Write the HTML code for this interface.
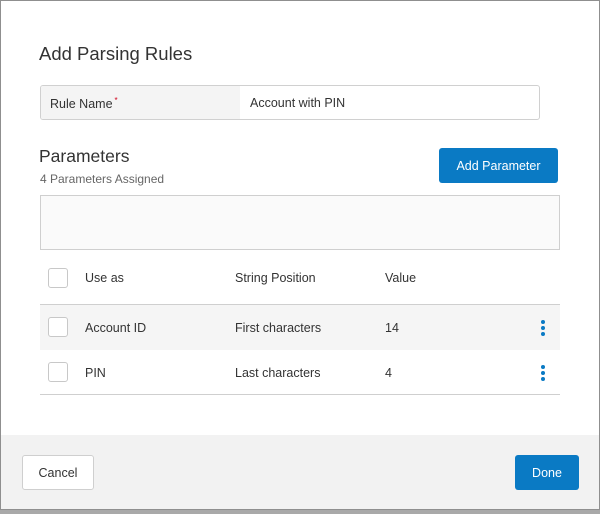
<!DOCTYPE html>
<html><head><style>
*{box-sizing:border-box;margin:0;padding:0}
body{width:600px;height:514px;background:#a9a9a9;font-family:"Liberation Sans",sans-serif;position:relative;overflow:hidden;color:#333}
.dlg{position:absolute;left:0;top:0;width:600px;height:510px;background:#fff}
.bd{position:absolute;left:0;top:0;width:600px;height:510px;border:1px solid #8f8f8f;pointer-events:none}
.a{position:absolute}
.t{font-size:12.5px;color:#333}
.cb{position:absolute;width:20px;height:20px;border:1px solid #c8c8c8;border-radius:3px;background:#fff}
.keb{position:absolute;width:4px}
.keb i{display:block;width:4px;height:4px;border-radius:2px;background:#0a7ac4;margin-bottom:2px}
</style></head><body>
<div class="dlg">
<div class="a" style="left:39px;top:43px;font-size:18.5px;color:#333">Add Parsing Rules</div>
<div class="a" style="left:40px;top:85px;width:500px;height:35px;border:1px solid #d0d0d0;border-radius:3px;overflow:hidden">
 <div class="a" style="left:0;top:0;width:199px;height:33px;background:#f4f4f4"></div>
 <div class="a t" style="left:9px;top:10px">Rule Name<sup style="color:#d0021b;font-size:8px;margin-left:2px">*</sup></div>
 <div class="a t" style="left:209px;top:10px">Account with PIN</div>
</div>
<div class="a" style="left:39px;top:146px;font-size:17.5px;color:#333">Parameters</div>
<div class="a" style="left:40px;top:172px;font-size:12px;color:#666">4 Parameters Assigned</div>
<div class="a" style="left:439px;top:148px;width:119px;height:35px;background:#0a7ac4;border-radius:3px;color:#fff;font-size:12.5px;line-height:36px;text-align:center">Add Parameter</div>
<div class="a" style="left:40px;top:195px;width:520px;height:55px;background:#fafafa;border:1px solid #cfcfcf"></div>
<div class="cb" style="left:48px;top:268px"></div>
<div class="a t" style="left:85px;top:271px">Use as</div>
<div class="a t" style="left:235px;top:271px">String Position</div>
<div class="a t" style="left:385px;top:271px">Value</div>
<div class="a" style="left:40px;top:304px;width:520px;height:1px;background:#cfcfcf"></div>
<div class="a" style="left:40px;top:305px;width:520px;height:45px;background:#f5f5f5"></div>
<div class="cb" style="left:48px;top:317px"></div>
<div class="a t" style="left:85px;top:321px">Account ID</div>
<div class="a t" style="left:235px;top:321px">First characters</div>
<div class="a t" style="left:385px;top:321px">14</div>
<div class="keb" style="left:541px;top:320px"><i></i><i></i><i></i></div>
<div class="cb" style="left:48px;top:362px"></div>
<div class="a t" style="left:85px;top:366px">PIN</div>
<div class="a t" style="left:235px;top:366px">Last characters</div>
<div class="a t" style="left:385px;top:366px">4</div>
<div class="keb" style="left:541px;top:365px"><i></i><i></i><i></i></div>
<div class="a" style="left:40px;top:394px;width:520px;height:1px;background:#cfcfcf"></div>
<div class="a" style="left:0;top:435px;width:600px;height:75px;background:#f2f2f2"></div>
<div class="a" style="left:22px;top:455px;width:72px;height:35px;background:#fff;border:1px solid #cfcfcf;border-radius:3px;font-size:12.5px;line-height:34px;text-align:center;color:#333">Cancel</div>
<div class="a" style="left:515px;top:455px;width:64px;height:35px;background:#0a7ac4;border-radius:3px;color:#fff;font-size:12.5px;line-height:36px;text-align:center">Done</div>
<div class="bd"></div>
</div>
</body></html>
